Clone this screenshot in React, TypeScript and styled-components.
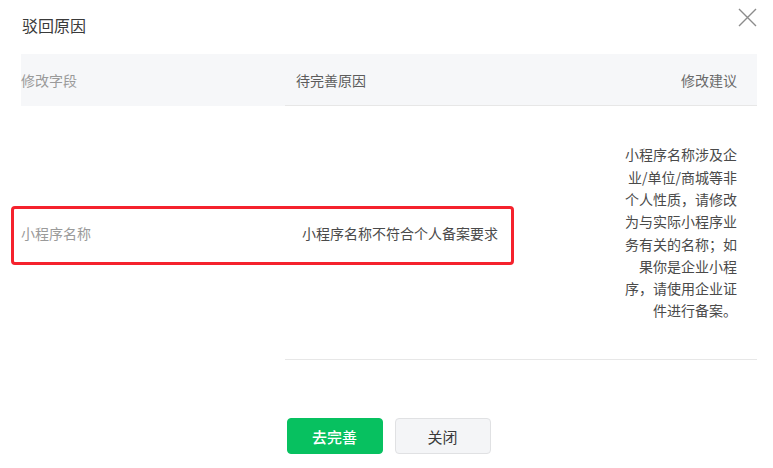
import React from "react";
import styled, { createGlobalStyle } from "styled-components";

const Global = createGlobalStyle`
  html, body { margin: 0; padding: 0; background: #fff; }
  body { font-family: "Noto Sans CJK SC", "Noto Sans", sans-serif; color: #353535; }
  * { box-sizing: border-box; }
`;

const Dialog = styled.div`
  width: 773px;
  height: 468px;
  background: #fff;
  display: flex;
  flex-direction: column;
  position: relative;
`;

const Head = styled.div`
  height: 50px;
  padding: 0 22px;
  display: flex;
  align-items: center;
  justify-content: space-between;
`;

const Title = styled.h2`
  margin: 0;
  font-size: 16px;
  font-weight: 400;
  color: #3a3a3a;
  line-height: 22px;
`;

const CloseBtn = styled.button`
  position: absolute;
  top: 8px;
  right: 16px;
  width: 19px;
  height: 19px;
  padding: 0;
  border: 0;
  background: none;
  cursor: pointer;
  display: flex;
`;

const Table = styled.div`
  margin: 4px 16px 0 21px;
  display: grid;
  grid-template-columns: 264px 1fr 152px;
`;

const HeadCell = styled.div<{ $align?: string; $pl?: number; $color?: string; $border?: boolean }>`
  height: 52px;
  background: #f6f7f9;
  display: flex;
  align-items: center;
  justify-content: ${(p) => p.$align || "flex-start"};
  padding: 0 20px 0 ${(p) => p.$pl ?? 0}px;
  font-size: 14px;
  color: ${(p) => p.$color || "#666"};
  border-bottom: 1px solid ${(p) => (p.$border ? "#e7e7e7" : "#f6f7f9")};
`;

const BodyRow = styled.div`
  display: contents;
`;

const BodyCell = styled.div<{ $pl?: number; $color?: string; $border?: boolean }>`
  height: 254px;
  display: flex;
  align-items: center;
  padding: 0 0 0 ${(p) => p.$pl ?? 0}px;
  font-size: 14px;
  color: ${(p) => p.$color || "#4a4a4a"};
  border-bottom: 1px solid ${(p) => (p.$border ? "#e7e7e7" : "transparent")};
  position: relative;
`;

const SuggestCell = styled(BodyCell)`
  justify-content: flex-end;
  padding: 0 20px 0 0;
`;

const Suggest = styled.div`
  width: 113px;
  text-align: right;
  line-height: 22.3px;
  font-size: 14px;
  color: #4a4a4a;
`;

const Highlight = styled.div`
  position: absolute;
  left: -10px;
  top: 100px;
  width: 503px;
  height: 59px;
  border: 3px solid #f5222d;
  border-radius: 4px;
  pointer-events: none;
`;

const Footer = styled.div`
  margin-top: 58px;
  display: flex;
  justify-content: center;
  gap: 12px;
  padding-left: 4px;
`;

const Button = styled.button<{ $primary?: boolean }>`
  width: 96px;
  height: 36px;
  border-radius: 4px;
  font-family: "Noto Sans CJK SC", sans-serif;
  font-size: 15px;
  font-weight: ${(p) => (p.$primary ? 500 : 400)};
  border: 1px solid ${(p) => (p.$primary ? "#07c160" : "#e0e1e3")};
  background: ${(p) => (p.$primary ? "#07c160" : "#f4f5f7")};
  color: ${(p) => (p.$primary ? "#fff" : "#3a3a3a")};
  cursor: pointer;
  padding: 0;
`;

export default function App() {
  return (
    <Dialog>
      <Global />
      <Head>
        <Title>驳回原因</Title>
      </Head>
      <CloseBtn aria-label="关闭">
        <svg width="19" height="19" viewBox="0 0 19 19">
          <path d="M1 1 L18 18 M18 1 L1 18" stroke="#8c8c8c" strokeWidth="1.4" fill="none" />
        </svg>
      </CloseBtn>
      <Table>
        <HeadCell $color="#9a9a9a">修改字段</HeadCell>
        <HeadCell $pl={11} $border $color="#5c5c5c">待完善原因</HeadCell>
        <HeadCell $align="flex-end" $border $color="#6a6a6a">修改建议</HeadCell>
        <BodyRow>
          <BodyCell $color="#9a9a9a">
            小程序名称
            <Highlight />
          </BodyCell>
          <BodyCell $pl={17} $border>小程序名称不符合个人备案要求</BodyCell>
          <SuggestCell $border>
            <Suggest>小程序名称涉及企业/单位/商城等非个人性质，请修改为与实际小程序业务有关的名称；如果你是企业小程序，请使用企业证件进行备案。</Suggest>
          </SuggestCell>
        </BodyRow>
      </Table>
      <Footer>
        <Button $primary>去完善</Button>
        <Button>关闭</Button>
      </Footer>
    </Dialog>
  );
}
